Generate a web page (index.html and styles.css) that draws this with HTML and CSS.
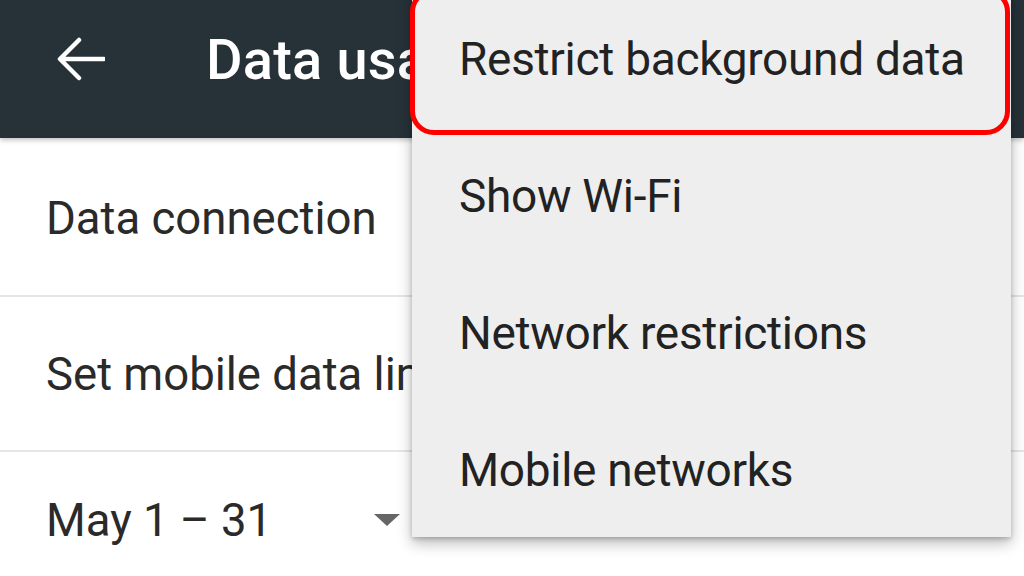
FILE: index.html
```html
<!DOCTYPE html>
<html>
<head>
<meta charset="utf-8">
<link rel="stylesheet" href="styles.css">
</head>
<body>
<div class="screen">
  <header class="appbar">
    <svg class="back" width="48" height="46" viewBox="0 0 48 46">
      <path d="M47 23H4M22 4L3 23L22 42" fill="none" stroke="#fff" stroke-width="4.5" stroke-linecap="round" stroke-linejoin="round"/>
    </svg>
    <h1 class="title">Data usage</h1>
  </header>
  <main class="list">
    <div class="row row-first">Data connection</div>
    <div class="row row-second">Set mobile data limit</div>
    <div class="row row-cycle">
      <span>May 1 – 31</span>
      <span class="caret"></span>
    </div>
  </main>
  <div class="menu">
    <div class="item item-highlight">Restrict background data</div>
    <div class="item">Show Wi‑Fi</div>
    <div class="item">Network restrictions</div>
    <div class="item">Mobile networks</div>
  </div>
</div>
</body>
</html>
```

FILE: styles.css
```css
* { box-sizing: border-box; }
html, body {
  margin: 0;
  padding: 0;
  background: #ffffff;
  font-family: Roboto, "Liberation Sans", sans-serif;
}
.screen {
  position: relative;
  width: 1024px;
  height: 576px;
  overflow: hidden;
  background: #ffffff;
}
.appbar {
  height: 138px;
  background: #263238;
  display: flex;
  align-items: flex-start;
  padding: 36px 0 0 57px;
  box-shadow: 0 2px 5px rgba(0,0,0,0.25);
  position: relative;
  z-index: 1;
}
.back {
  display: block;
  flex: none;
}
.title {
  margin: -11px 0 0 101px;
  font-size: 56px;
  font-weight: 500;
  color: #ffffff;
  line-height: 70px;
  white-space: nowrap;
  letter-spacing: 0.2px;
}
.list {
  display: flex;
  flex-direction: column;
}
.row {
  font-size: 45.5px;
  color: #2a2a2a;
  padding-left: 46px;
  display: flex;
  align-items: center;
  border-bottom: 2px solid #e6e6e6;
  white-space: nowrap;
}
.row-first { height: 159px; padding-top: 4px; }
.row-second { height: 155px; padding-top: 2px; }
.row-cycle {
  border-bottom: none;
  height: 130px;
  padding-top: 6px;
  justify-content: space-between;
  width: 400px;
}
.caret {
  width: 0;
  height: 0;
  border-left: 13px solid transparent;
  border-right: 13px solid transparent;
  border-top: 12px solid #666666;
  margin-top: 0;
}
.menu {
  position: absolute;
  left: 412px;
  top: -10px;
  width: 599px;
  height: 547px;
  background: #eeeeee;
  box-shadow: 0 6px 14px rgba(0,0,0,0.28), 0 2px 4px rgba(0,0,0,0.18);
  z-index: 2;
  display: flex;
  flex-direction: column;
}
.item {
  height: 137px;
  flex: none;
  display: flex;
  align-items: center;
  padding-left: 47px;
  font-size: 46px;
  letter-spacing: -0.3px;
  color: #222222;
  white-space: nowrap;
  position: relative;
}
.item-highlight::after {
  content: "";
  position: absolute;
  left: -2px;
  right: 1px;
  top: -2px;
  bottom: -8px;
  border: 5px solid #ff0000;
  border-radius: 24px;
}
```
